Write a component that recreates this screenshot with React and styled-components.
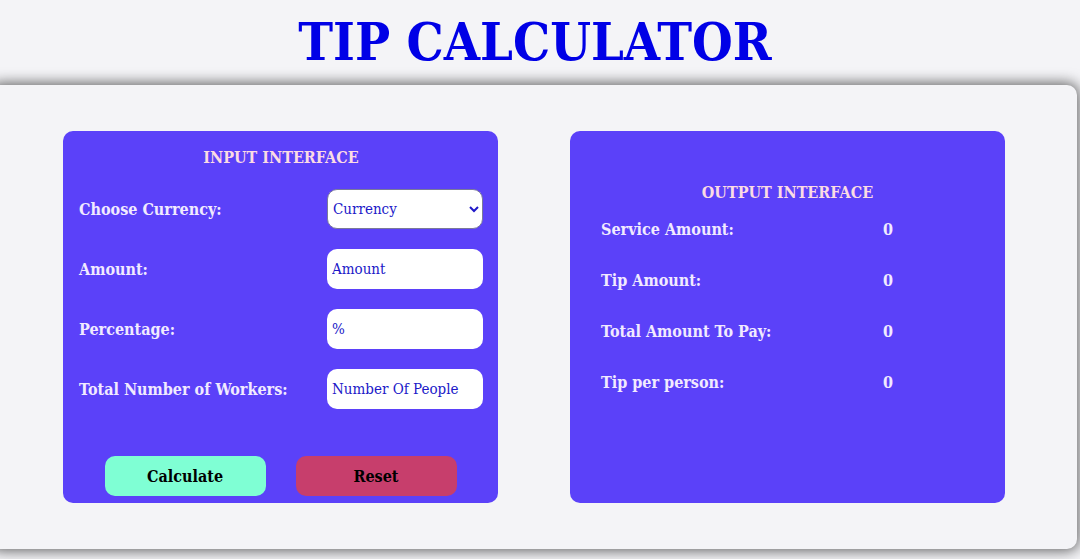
import React from "react";
import styled, { createGlobalStyle } from "styled-components";

const GlobalStyle = createGlobalStyle`
  html, body {
    margin: 0;
    background: #f4f4f7;
    font-family: "DejaVu Serif Condensed", "Liberation Serif", serif;
    overflow: hidden;
  }
`;

const Page = styled.div`
  height: 559px;
  display: flex;
  flex-direction: column;
`;

const Title = styled.h1`
  margin: 0;
  flex: 0 0 85px;
  padding-right: 10px;
  line-height: 84px;
  text-align: center;
  color: #0000e6;
  font-size: 52px;
  font-weight: bold;
`;

const Card = styled.div`
  display: flex;
  gap: 72px;
  flex: 0 0 464px;
  width: 1086px;
  box-sizing: border-box;
  margin-left: -9px;
  padding: 46px 72px;
  border-radius: 10px;
  background: #f4f4f7;
  box-shadow: 0 0 14px 2px rgba(0, 0, 0, 0.6);
`;

const Panel = styled.div`
  width: 435px;
  height: 372px;
  box-sizing: border-box;
  background: #5b41f9;
  border-radius: 10px;
  display: flex;
  flex-direction: column;
  padding: ${(p) => p.$pad};
`;

const Heading = styled.h2`
  margin: ${(p) => p.$margin};
  font-size: 16px;
  line-height: 20px;
  font-weight: bold;
  text-align: center;
  color: #fbdbe4;
`;

const Form = styled.div`
  display: flex;
  flex-direction: column;
  gap: 20px;
`;

const Row = styled.div`
  display: flex;
  align-items: center;
  justify-content: space-between;
  height: 40px;
`;

const Label = styled.label`
  font-size: 16px;
  font-weight: bold;
  color: #f1eaff;
`;

const fieldStyles = `
  width: 156px;
  height: 40px;
  box-sizing: border-box;
  border-radius: 10px;
  background: #fff;
  font-family: "DejaVu Serif Condensed", "Liberation Serif", serif;
  font-size: 15px;
  color: #2018c8;
  padding: 0 5px;
  outline: none;
`;

const Input = styled.input`
  ${fieldStyles}
  border: none;

  &::placeholder {
    color: #2018c8;
  }
`;

const Select = styled.select`
  ${fieldStyles}
  border: 1px solid #7a7a9a;
  padding: 0 1px;
`;

const Buttons = styled.div`
  display: flex;
  justify-content: center;
  gap: 30px;
  margin-top: 47px;
  padding-right: 1px;
`;

const Button = styled.button`
  width: 161px;
  height: 40px;
  border: none;
  border-radius: 10px;
  background: ${(p) => p.$bg};
  color: #000;
  font-family: "DejaVu Serif Condensed", "Liberation Serif", serif;
  font-size: 16px;
  font-weight: bold;
  cursor: pointer;
`;

const Results = styled.div`
  display: flex;
  flex-direction: column;
  gap: 31px;
`;

const ResultRow = styled.div`
  display: grid;
  grid-template-columns: 282px 1fr;
  line-height: 20px;
  font-size: 16px;
  font-weight: bold;
  color: #f1eaff;
`;

const fields = [
  { label: "Amount:", placeholder: "Amount" },
  { label: "Percentage:", placeholder: "%" },
  { label: "Total Number of Workers:", placeholder: "Number Of People" },
];

const results = [
  "Service Amount:",
  "Tip Amount:",
  "Total Amount To Pay:",
  "Tip per person:",
];

export default function App() {
  return (
    <Page>
      <GlobalStyle />
      <Title>TIP CALCULATOR</Title>
      <Card>
        <Panel $pad="0 15px 0 16px">
          <Heading $margin="17px 0 21px">INPUT INTERFACE</Heading>
          <Form>
            <Row>
              <Label>Choose Currency:</Label>
              <Select defaultValue="">
                <option value="">Currency</option>
                <option value="usd">USD</option>
                <option value="eur">EUR</option>
              </Select>
            </Row>
            {fields.map((f) => (
              <Row key={f.label}>
                <Label>{f.label}</Label>
                <Input type="number" placeholder={f.placeholder} />
              </Row>
            ))}
          </Form>
          <Buttons>
            <Button $bg="#7fffd4">Calculate</Button>
            <Button $bg="#c73e6c">Reset</Button>
          </Buttons>
        </Panel>
        <Panel $pad="0 31px">
          <Heading $margin="52px 0 17px">OUTPUT INTERFACE</Heading>
          <Results>
            {results.map((r) => (
              <ResultRow key={r}>
                <span>{r}</span>
                <span>0</span>
              </ResultRow>
            ))}
          </Results>
        </Panel>
      </Card>
    </Page>
  );
}
